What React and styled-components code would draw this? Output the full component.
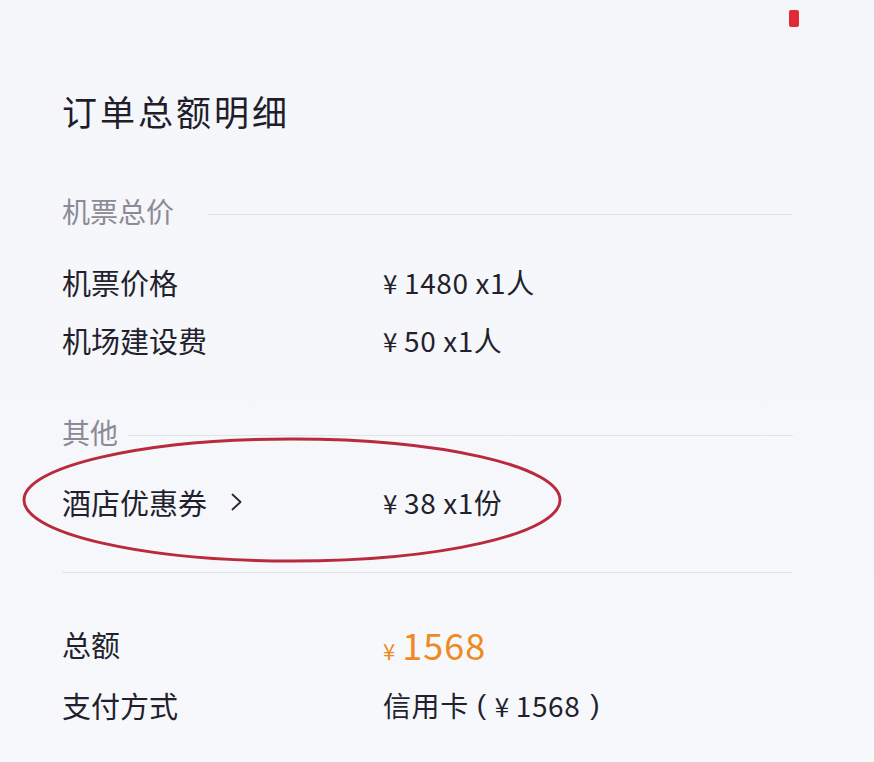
import React from 'react'
import styled, { createGlobalStyle } from 'styled-components'

const GlobalStyle = createGlobalStyle`
  html, body {
    margin: 0;
    padding: 0;
    background: #f5f7fb;
  }
  body {
    font-family: "Noto Sans CJK SC", "Noto Sans", sans-serif;
    color: #241f2c;
  }
`

const Page = styled.div`
  position: relative;
  width: 874px;
  height: 762px;
  box-sizing: border-box;
  padding: 89px 81px 0 62px;
  background: linear-gradient(180deg, #f4f6fa 0%, #f6f8fc 100%);
  overflow: hidden;
`

const StatusMark = styled.span`
  position: absolute;
  top: 10px;
  left: 789px;
  width: 10px;
  height: 17px;
  border-radius: 2px;
  background: #e22a36;
`

const Title = styled.h1`
  margin: 0;
  height: 44px;
  line-height: 44px;
  font-size: 35px;
  font-weight: 400;
  letter-spacing: 3px;
  color: #221d2b;
`

const SectionHead = styled.div`
  display: flex;
  align-items: center;
  height: 40px;
  margin-top: ${p => p.$top}px;
  font-size: 28px;
  color: #8c8a95;

  &::after {
    content: '';
    flex: 1;
    height: 1px;
    margin-left: ${p => p.$lineGap}px;
    margin-top: 6px;
    background: #e2e4ea;
  }
`

const Row = styled.div`
  position: relative;
  display: flex;
  align-items: center;
  height: ${p => p.$h || 58}px;
  margin-top: ${p => p.$top || 0}px;
`

const Label = styled.div`
  width: 321px;
  flex-shrink: 0;
  font-size: 29px;
  display: flex;
  align-items: center;
`

const Chevron = styled.svg`
  margin-left: 24px;
  width: 11px;
  height: 18px;
`

const Value = styled.div`
  display: flex;
  align-items: center;
  font-size: 28px;
  letter-spacing: 0.6px;
  white-space: pre;
`

const Yen = styled.span`
  margin-right: ${p => p.$gap ?? 6}px;
  font-size: ${p => p.$size || 26}px;
`

const Paren = styled.span`
  margin: 0 ${p => p.$right || 0}px 0 ${p => p.$left || 0}px;
  font-family: "Liberation Sans", sans-serif;
  font-size: 28px;
`

const TotalValue = styled.div`
  display: flex;
  align-items: baseline;
  color: #ef8a22;
  font-size: 36px;
  font-weight: 400;
  letter-spacing: 1px;
`

const Divider = styled.hr`
  margin: 41px 0 0;
  border: 0;
  height: 1px;
  background: #e2e4ea;
`

const Ring = styled.svg`
  position: absolute;
  left: -42px;
  top: -37px;
  width: 544px;
  height: 130px;
  overflow: visible;
  pointer-events: none;
`

export default function App() {
  return (
    <>
      <GlobalStyle />
      <Page>
        <StatusMark />
        <Title>订单总额明细</Title>

        <SectionHead $top={58} $lineGap={34}>机票总价</SectionHead>
        <Row $top={22}>
          <Label>机票价格</Label>
          <Value><Yen>¥</Yen>1480 x1人</Value>
        </Row>
        <Row>
          <Label>机场建设费</Label>
          <Value><Yen>¥</Yen>50 x1人</Value>
        </Row>

        <SectionHead $top={43} $lineGap={10}>其他</SectionHead>
        <Row $top={21}>
          <Label>
            酒店优惠券
            <Chevron viewBox="0 0 11 18">
              <polyline points="1.5,1.5 9.5,9 1.5,16.5" fill="none" stroke="#2b2633" strokeWidth="1.8" strokeLinecap="round" strokeLinejoin="round" />
            </Chevron>
          </Label>
          <Value><Yen>¥</Yen>38 x1份</Value>
          <Ring viewBox="0 0 544 130">
            <ellipse cx="272" cy="64" rx="268" ry="61" fill="none" stroke="#b92a3c" strokeWidth="3" />
          </Ring>
        </Row>

        <Divider />

        <Row $top={41} $h={60}>
          <Label>总额</Label>
          <TotalValue><Yen $size={22} $gap={6}>¥</Yen>1568</TotalValue>
        </Row>
        <Row $h={62}>
          <Label>支付方式</Label>
          <Value>
            信用卡
            <Paren $left={8} $right={8}>(</Paren>
            <Yen>¥</Yen>1568
            <Paren $left={10}>)</Paren>
          </Value>
        </Row>
      </Page>
    </>
  )
}
